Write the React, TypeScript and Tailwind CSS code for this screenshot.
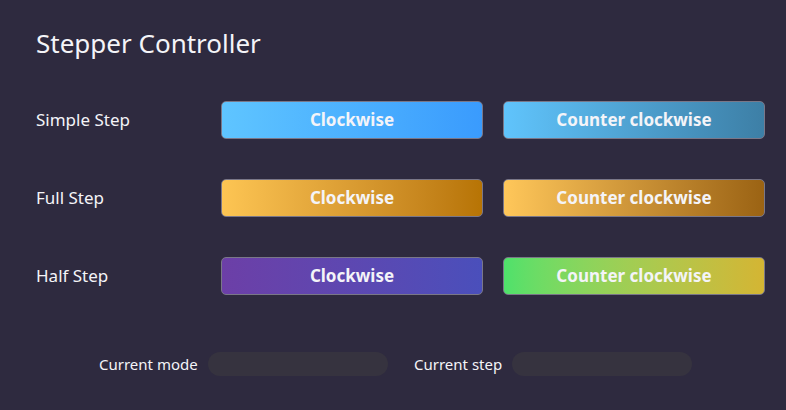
const rows = [
  {
    label: 'Simple Step',
    cw: 'bg-gradient-to-r from-[#5fc5ff] to-[#3a9bfd]',
    ccw: 'bg-gradient-to-r from-[#60c4fc] to-[#3d7fa6]',
  },
  {
    label: 'Full Step',
    cw: 'bg-gradient-to-r from-[#fdc553] to-[#b77404]',
    ccw: 'bg-gradient-to-r from-[#ffc75a] to-[#9b6313]',
  },
  {
    label: 'Half Step',
    cw: 'bg-gradient-to-r from-[#6c3fa7] to-[#4a4fbb]',
    ccw: 'bg-gradient-to-r from-[#4ee16b] to-[#d4b533]',
  },
]

export default function App() {
  return (
    <div
      className="w-[786px] h-[410px] bg-[#2e2a3f] text-white overflow-hidden"
      style={{ fontFamily: '"Noto Sans", "Open Sans", sans-serif' }}
    >
      <h1 className="pl-[36px] pt-[25px] text-[26px] leading-[36px] text-[#f4f4f8]">Stepper Controller</h1>

      <div className="mt-[40px] flex flex-col gap-[40px]">
        {rows.map((r) => (
          <div key={r.label} className="flex items-center">
            <div className="w-[221px] pl-[36px] text-[17px] text-[#f4f4f8]">{r.label}</div>
            <button
              className={`w-[262px] h-[38px] rounded-[5px] border border-[#7a7788] text-[17px] font-bold text-[#f4f4f8] ${r.cw}`}
            >
              Clockwise
            </button>
            <button
              className={`ml-[20px] w-[262px] h-[38px] rounded-[5px] border border-[#7a7788] text-[17px] font-bold text-[#f4f4f8] ${r.ccw}`}
            >
              Counter clockwise
            </button>
          </div>
        ))}
      </div>

      <div className="mt-[57px] flex items-center text-[15px] text-[#f4f4f8]">
        <span className="pl-[99px] w-[208px]">Current mode</span>
        <div className="w-[180px] h-[24px] rounded-full bg-[#36333f]" />
        <span className="ml-[26px] w-[98px]">Current step</span>
        <div className="w-[180px] h-[24px] rounded-full bg-[#36333f]" />
      </div>
    </div>
  )
}
